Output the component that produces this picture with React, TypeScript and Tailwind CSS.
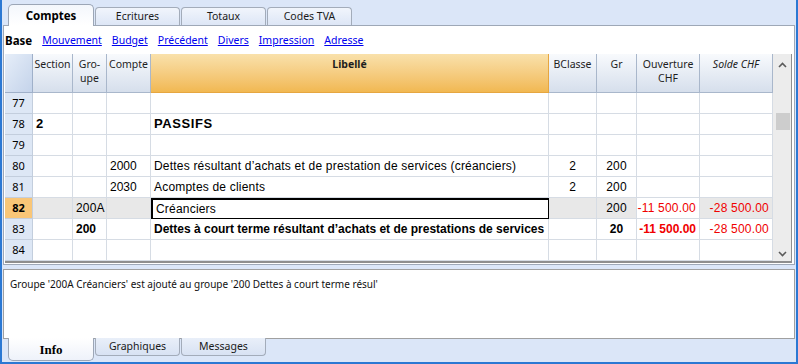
const ui = "font-['Noto_Sans',sans-serif]";
const cell = "font-['Liberation_Sans',Arial,sans-serif] text-[12px]";
const cols = 'grid grid-cols-[28px_40px_34px_44px_398px_48px_40px_63px_73px]';

type Row = {
  n: number;
  section?: string;
  groupe?: string;
  compte?: string;
  libelle?: string;
  bclasse?: string;
  gr?: string;
  ouv?: string;
  solde?: string;
  bold?: boolean;
  big?: boolean;
  active?: boolean;
};

const rows: Row[] = [
  { n: 77 },
  { n: 78, section: '2', libelle: 'PASSIFS', big: true },
  { n: 79 },
  { n: 80, compte: '2000', libelle: 'Dettes résultant d\u2019achats et de prestation de services (créanciers)', bclasse: '2', gr: '200' },
  { n: 81, compte: '2030', libelle: 'Acomptes de clients', bclasse: '2', gr: '200' },
  { n: 82, groupe: '200A', libelle: 'Créanciers', gr: '200', ouv: '-11 500.00', solde: '-28 500.00', active: true },
  { n: 83, groupe: '200', libelle: 'Dettes à court terme résultant d\u2019achats et de prestations de services', gr: '20', ouv: '-11 500.00', solde: '-28 500.00', bold: true },
  { n: 84 },
];

function Tab({ label, active }: { label: string; active?: boolean }) {
  if (active) {
    return (
      <div
        className={`relative z-10 flex h-[22px] w-[86px] items-center justify-center rounded-t-[5px] border border-b-0 border-[#9ca6b6] bg-gradient-to-b from-[#f4f7fc] to-white text-[11.5px] font-bold text-black ${ui}`}
      >
        {label}
      </div>
    );
  }
  return (
    <div
      className={`flex h-[18px] w-[85px] items-center justify-center rounded-t-[4px] border border-b-0 border-[#a3acba] bg-gradient-to-b from-[#f1f5fc] to-[#dde6f6] text-[10.5px] text-[#1a1a1a] ${ui}`}
    >
      {label}
    </div>
  );
}

function BottomTab({ label, active }: { label: string; active?: boolean }) {
  if (active) {
    return (
      <div className="relative z-10 flex h-[23px] w-[86px] items-center justify-center rounded-b-[5px] border border-t-0 border-[#9ca6b6] bg-gradient-to-b from-white to-[#eef2fa] pt-[2px] font-['Liberation_Serif',serif] text-[13px] font-bold text-black">
        {label}
      </div>
    );
  }
  return (
    <div className={`flex h-[18px] w-[85px] items-center justify-center rounded-b-[4px] border border-t-0 border-[#a3acba] bg-gradient-to-b from-[#e9eff9] to-[#d8e2f3] pt-px text-[10.5px] text-[#1a1a1a] ${ui}`}>
      {label}
    </div>
  );
}

function HeaderCell({ children, className = '' }: { children?: React.ReactNode; className?: string }) {
  return (
    <div
      className={`flex flex-col items-center border-r border-b border-[#a9b7cb] bg-gradient-to-b from-[#f8fafd] to-[#d6dfec] pt-[3px] text-center text-[10.5px] leading-[14px] text-[#1e1e1e] ${ui} ${className}`}
    >
      {children}
    </div>
  );
}

function GridRow({ row }: { row: Row }) {
  const base = 'flex items-center border-r border-b border-[#d6dce4] px-[3px] overflow-hidden whitespace-nowrap';
  const shade = row.active ? 'bg-[#e8e8e8]' : 'bg-white';
  const weight = row.bold ? 'font-bold' : 'tracking-[0.2px]';
  return (
    <div className={`${cols} h-[21px] ${cell} text-black`}>
      <div
        className={`flex items-center justify-center border-r border-b border-[#c3cedd] text-[11px] ${ui} ${
          row.active ? 'bg-[#f9c677] font-bold' : 'bg-[#dde7f5]'
        }`}
      >
        {row.n}
      </div>
      <div className={`${base} ${shade} ${row.big ? 'text-[13px] font-bold' : ''}`}>{row.section}</div>
      <div className={`${base} ${shade} ${weight}`}>{row.groupe}</div>
      <div className={`${base} ${shade}`}>{row.compte}</div>
      <div
        className={`${base} ${row.active ? 'border-2 border-black bg-white' : 'bg-white'} ${
          row.big ? 'text-[13px] font-bold tracking-[0.6px]' : weight
        }`}
      >
        {row.libelle}
      </div>
      <div className={`${base} ${shade} justify-center`}>{row.bclasse}</div>
      <div className={`${base} ${shade} justify-center ${weight}`}>{row.gr}</div>
      <div className={`${base} bg-white justify-end text-[#f00000] ${weight}`}>{row.ouv}</div>
      <div className={`${base} ${shade} justify-end text-[#f00000] tracking-[0.2px]`}>{row.solde}</div>
    </div>
  );
}

function Chevron({ down }: { down?: boolean }) {
  return (
    <svg width="9" height="6" viewBox="0 0 9 6" className={down ? 'rotate-180' : ''}>
      <path d="M1 5 L4.5 1.5 L8 5" fill="none" stroke="#5a5a5a" strokeWidth="1.6" />
    </svg>
  );
}

export default function App() {
  const links = ['Mouvement', 'Budget', 'Précédent', 'Divers', 'Impression', 'Adresse'];
  return (
    <div className="flex h-[364px] w-[798px] flex-col overflow-hidden border-x-2 border-b-2 border-[#2b78d3] bg-[#dbe6f8]">
      <div className="flex h-[25px] items-end gap-px pl-[6px]">
        <div className="-mb-px">
          <Tab label="Comptes" active />
        </div>
        <Tab label="Ecritures" />
        <Tab label="Totaux" />
        <Tab label="Codes TVA" />
      </div>

      <div className="ml-px h-[240px] w-[792px] border border-[#9ea8b7] bg-white">
        <div className={`flex h-[28px] items-center gap-[10px] pt-[2px] pl-px text-[10.5px] ${ui}`}>
          <span className="text-[11.5px] font-bold text-black">Base</span>
          {links.map(l => (
            <span key={l} className="text-[#0000ee] underline">
              {l}
            </span>
          ))}
        </div>

        <div className="ml-px flex w-[787px] border-b-2 border-[#8e8e8e]">
          <div className="w-[768px]">
            <div className={`${cols} h-[39px]`}>
              <div className="border-r border-b border-[#9fb0c9] bg-gradient-to-br from-[#e6eef9] to-[#c4d3ea]" />
              <HeaderCell>Section</HeaderCell>
              <HeaderCell>
                <span>Gro-</span>
                <span>upe</span>
              </HeaderCell>
              <HeaderCell>Compte</HeaderCell>
              <HeaderCell className="!border-[#e6a640] !from-[#f9e1ab] !to-[#f1b851] font-bold">Libellé</HeaderCell>
              <HeaderCell>BClasse</HeaderCell>
              <HeaderCell>Gr</HeaderCell>
              <HeaderCell>
                <span>Ouverture</span>
                <span>CHF</span>
              </HeaderCell>
              <HeaderCell className="italic">Solde CHF</HeaderCell>
            </div>
            {rows.map(r => (
              <GridRow key={r.n} row={r} />
            ))}
          </div>
          <div className="relative flex w-[19px] flex-col items-center justify-between border-r border-[#8e8e8e] bg-[#ececec] pt-[8px] pb-[4px]">
            <Chevron />
            <div className="absolute top-[59px] left-[3px] h-[17px] w-[14px] bg-[#cdcdcd]" />
            <Chevron down />
          </div>
        </div>
      </div>

      <div className="mt-[4px] ml-px h-[70px] w-[792px] border border-[#a0a0a0] bg-white pt-[7px] pl-[6px]">
        <p className={`text-[10px] text-[#111] ${ui}`}>
          Groupe '200A Créanciers' est ajouté au groupe '200 Dettes à court terme résul'
        </p>
      </div>

      <div className="-mt-px flex items-start gap-px pl-[6px]">
        <BottomTab label="Info" active />
        <BottomTab label="Graphiques" />
        <BottomTab label="Messages" />
      </div>
    </div>
  );
}
